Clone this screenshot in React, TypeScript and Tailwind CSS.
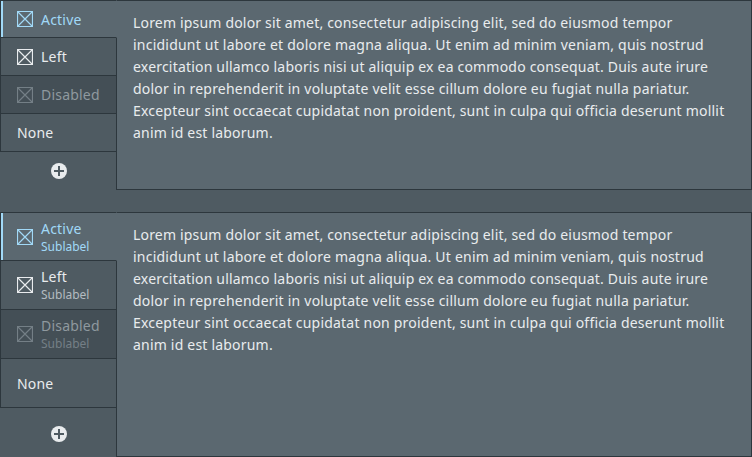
const lines = [
  { text: "Lorem ipsum dolor sit amet, consectetur adipiscing elit, sed do eiusmod tempor", track: "tracking-[0.18px]" },
  { text: "incididunt ut labore et dolore magna aliqua. Ut enim ad minim veniam, quis nostrud", track: "tracking-[0.22px]" },
  { text: "exercitation ullamco laboris nisi ut aliquip ex ea commodo consequat. Duis aute irure", track: "tracking-[0.195px]" },
  { text: "dolor in reprehenderit in voluptate velit esse cillum dolore eu fugiat nulla pariatur.", track: "tracking-[0.22px]" },
  { text: "Excepteur sint occaecat cupidatat non proident, sunt in culpa qui officia deserunt mollit", track: "tracking-[0.21px]" },
  { text: "anim id est laborum.", track: "tracking-[0.2px]" },
];

function BoxIcon() {
  return (
    <svg className="size-4 shrink-0" viewBox="0 0 16 16" fill="none" stroke="currentColor">
      <path d="M.5.5h15v15H.5z" strokeWidth="1.2" />
      <path d="M1 1l14 14M15 1L1 15" strokeWidth="1.2" />
    </svg>
  );
}

type TabState = "active" | "normal" | "disabled";

const looks = {
  active: "border-t border-t-[#2d373d] border-r-[#5b6870] bg-[#5b6870] text-[#a1d9f7]",
  normal: "border-r-[#2d373d] bg-[#4f5b62] text-[#e9ecee]",
  disabled: "border-r-[#2d373d] bg-[#444f56] text-[#8f999f]",
};

const subColors = {
  active: "text-[#a1d9f7]",
  normal: "text-[#b4bbc0]",
  disabled: "text-[#747f86]",
};

function Tab({ label, sub, icon = true, state, className }: { label: string; sub?: boolean; icon?: boolean; state: TabState; className: string }) {
  const active = state === "active";
  return (
    <div className={`flex w-[117px] items-stretch border-x border-b border-b-[#2d373d] border-l-[#2d373d] ${looks[state]} ${className}`}>
      {active && <div className="w-0.5 bg-[#a1d9f7]" />}
      <div className={`flex items-center gap-2 ${active ? "pl-[14px]" : "pl-4"} ${active && sub ? "pt-px" : ""}`}>
        {icon && (
          <div className={state === "disabled" ? "text-[#747f86]" : ""}>
            <BoxIcon />
          </div>
        )}
        <div className={active && !sub ? "pt-0.5" : ""}>
          <div className="text-sm leading-[18px] tracking-[0.2px]">{label}</div>
          {sub && <div className={`text-xs leading-[17px] ${subColors[state]}`}>Sublabel</div>}
        </div>
      </div>
    </div>
  );
}

function Panel({ sub }: { sub?: boolean }) {
  const height = sub ? "h-[49px]" : "h-[38px]";
  return (
    <section className={`flex ${sub ? "h-[245px]" : "h-[190px]"}`}>
      <nav className="flex w-[117px] shrink-0 flex-col">
        <Tab label="Active" sub={sub} state="active" className={height} />
        <Tab label="Left" sub={sub} state="normal" className={height} />
        <Tab label="Disabled" sub={sub} state="disabled" className={height} />
        <Tab label="None" icon={false} state="normal" className={sub ? "h-[49px] pt-px" : "h-[38px]"} />
        <div className="flex grow justify-center border-r border-[#2d373d]">
          <svg className={`${sub ? "mt-[18px]" : "mt-[11px]"} ml-0.5 size-4`} viewBox="0 0 16 16">
            <circle cx="8" cy="8" r="8" fill="#e9ecee" />
            <path d="M8 3v10M3 8h10" stroke="#4f5b62" strokeWidth="2" />
          </svg>
        </div>
      </nav>
      <div className="grow border-y border-r border-[#2d373d] bg-[#5b6870] pl-4 pt-[11px] text-sm leading-[22px]">
        {lines.map((line) => (
          <p key={line.text} className={`whitespace-nowrap ${line.track}`}>{line.text}</p>
        ))}
      </div>
    </section>
  );
}

export default function App() {
  return (
    <main className="flex h-[457px] w-[752px] flex-col gap-[22px] overflow-hidden bg-[#4f5b62] font-['Noto_Sans',sans-serif] text-[#e9ecee]">
      <Panel />
      <Panel sub />
    </main>
  );
}
